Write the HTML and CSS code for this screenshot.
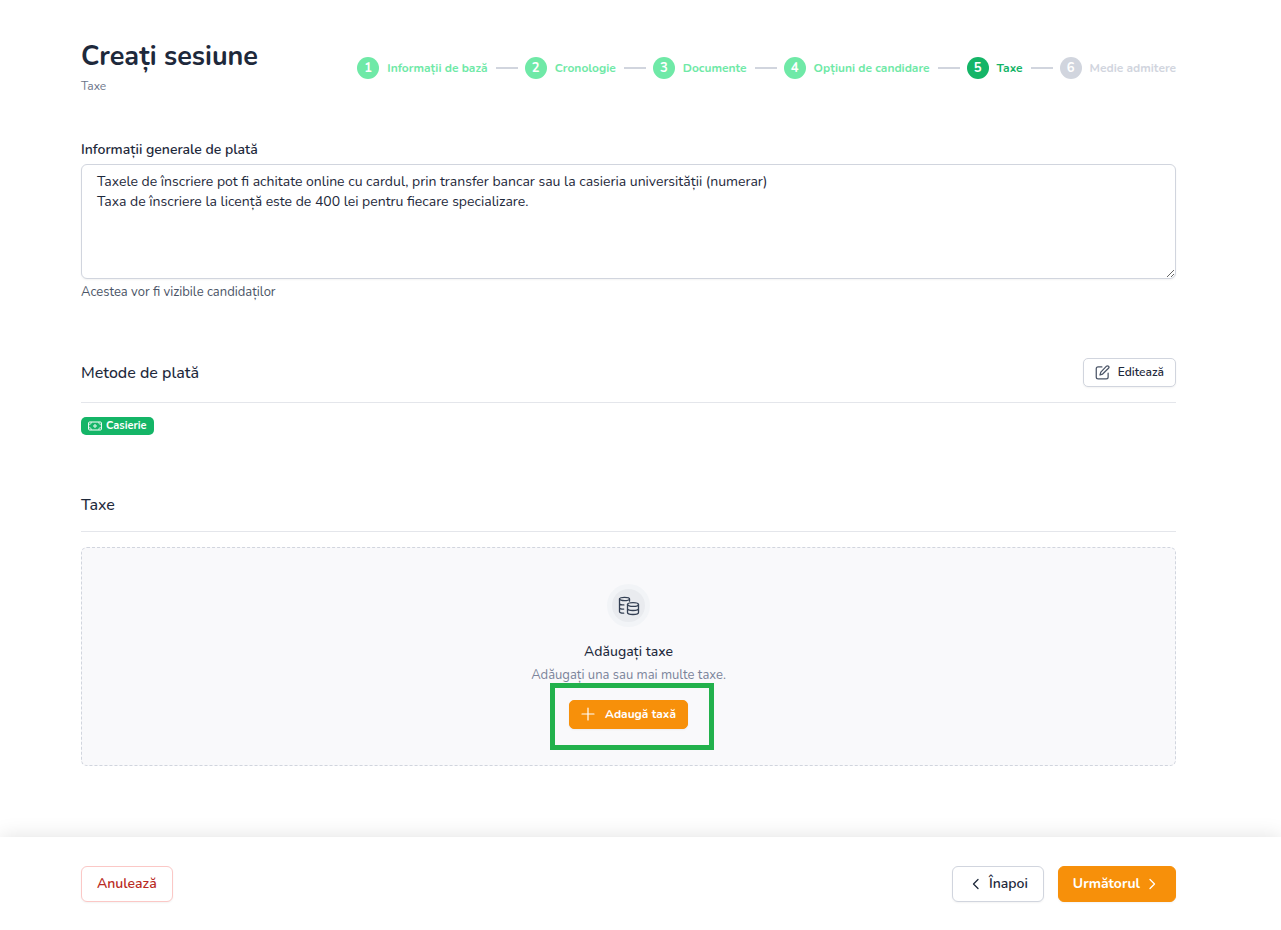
FILE: index.html
```html
<!DOCTYPE html>
<html lang="ro">
<head>
<meta charset="utf-8">
<meta name="viewport" content="width=device-width, initial-scale=1">
<title>Creați sesiune – Taxe</title>
<link rel="stylesheet" href="styles.css">
</head>
<body>
<main class="page">
  <header class="page-header">
    <div class="heading">
      <h1 class="title">Creați sesiune</h1>
      <p class="subtitle">Taxe</p>
    </div>
    <ol class="steps">
      <li class="step done"><span class="num">1</span><span>Informații de bază</span></li>
      <li class="step done"><span class="num">2</span><span>Cronologie</span></li>
      <li class="step done"><span class="num">3</span><span>Documente</span></li>
      <li class="step done"><span class="num">4</span><span>Opțiuni de candidare</span></li>
      <li class="step current" aria-current="step"><span class="num">5</span><span>Taxe</span></li>
      <li class="step"><span class="num">6</span><span>Medie admitere</span></li>
    </ol>
  </header>

  <div class="field">
    <label class="label" for="info">Informații generale de plată</label>
    <textarea class="textarea" id="info" rows="5" aria-describedby="info-help">Taxele de înscriere pot fi achitate online cu cardul, prin transfer bancar sau la casieria universității (numerar)
Taxa de înscriere la licență este de 400 lei pentru fiecare specializare.</textarea>
    <p class="help" id="info-help">Acestea vor fi vizibile candidaților</p>
  </div>

  <section class="methods">
    <div class="section-head">
      <h2 class="section-title">Metode de plată</h2>
      <button class="btn btn-small" type="button">
        <svg class="icon-edit" viewBox="0 0 24 24" fill="none" stroke="currentColor" stroke-width="2" stroke-linecap="round" stroke-linejoin="round" aria-hidden="true"><path d="M11 3H5a3 3 0 0 0-3 3v13a3 3 0 0 0 3 3h13a3 3 0 0 0 3-3v-6"/><path d="M18.400 1.900a2.100 2.100 0 0 1 3.200 3.200L12.200 14.500 8 16l1.300-4.500z"/></svg>
        Editează
      </button>
    </div>
    <span class="badge">
      <svg class="icon-cash" viewBox="0 0 14 10" fill="none" stroke="currentColor" aria-hidden="true"><rect x=".6" y="1" width="12.800" height="8" rx="1"/><circle cx="7" cy="5" r="1.200"/><path d="M3.200 1v.8A1.500 1.500 0 0 1 1.700 3.300H.6M10.800 1v.8a1.500 1.500 0 0 0 1.500 1.500h1.100M3.200 9v-.8a1.500 1.500 0 0 0-1.500-1.500H.6M10.800 9v-.8a1.500 1.500 0 0 1 1.500-1.500h1.100" stroke-width=".7"/></svg>
      Casierie
    </span>
  </section>

  <section class="fees">
    <div class="section-head">
      <h2 class="section-title">Taxe</h2>
    </div>
    <div class="empty">
      <span class="empty-icon">
        <svg class="icon-coins" viewBox="0 0 22 20" fill="none" stroke="currentColor" stroke-width="1.300" stroke-linecap="round" stroke-linejoin="round" aria-hidden="true"><ellipse cx="6.500" cy="3" rx="5" ry="1.700"/><path d="M1.500 3v12.500c0 .9 1.600 1.600 4.200 1.700M1.500 7.200c0 .9 1.800 1.600 4.400 1.700M1.500 11.400c0 .9 1.600 1.600 4.200 1.700M11.500 3v2.200"/><ellipse cx="15" cy="8.500" rx="5.500" ry="1.900"/><path d="M9.500 8.500v8c0 1.100 2.400 2 5.500 2s5.500-.9 5.500-2v-8M9.500 12.500c0 1.100 2.400 2 5.500 2s5.500-.9 5.500-2"/></svg>
      </span>
      <h3 class="empty-title">Adăugați taxe</h3>
      <p class="empty-text">Adăugați una sau mai multe taxe.</p>
      <div class="empty-action">
        <button class="btn btn-small btn-primary" type="button">
          <svg class="icon-plus" viewBox="0 0 14 14" fill="none" stroke="currentColor" stroke-width="1.200" stroke-linecap="round" aria-hidden="true"><path d="M7 1v12M1 7h12"/></svg>
          Adaugă taxă
        </button>
        <span class="highlight"></span>
      </div>
    </div>
  </section>
</main>

<footer class="footer">
  <button class="btn btn-danger" type="button">Anulează</button>
  <div class="footer-nav">
    <button class="btn btn-back" type="button">
      <svg class="icon-chevron" viewBox="0 0 8 12" fill="none" stroke="currentColor" stroke-width="1.300" stroke-linecap="round" stroke-linejoin="round" aria-hidden="true"><path d="M6 1.500 1.500 6 6 10.500"/></svg>
      Înapoi
    </button>
    <button class="btn btn-primary btn-next" type="button">
      Următorul
      <svg class="icon-chevron" viewBox="0 0 8 12" fill="none" stroke="currentColor" stroke-width="1.300" stroke-linecap="round" stroke-linejoin="round" aria-hidden="true"><path d="M2 1.500 6.500 6 2 10.500"/></svg>
    </button>
  </div>
</footer>
</body>
</html>
```
FILE: styles.css
```css
* {
  box-sizing: border-box;
  margin: 0;
}

body {
  min-height: 100vh;
  display: flex;
  flex-direction: column;
  background: #fff;
  color: #1e293b;
  font: 14px/20px Nunito, "Open Sans", sans-serif;
}

button,
textarea {
  font: inherit;
  color: inherit;
}

.page {
  flex: 1;
  padding: 38px 105px 64px 81px;
}

.page-header {
  display: flex;
  justify-content: space-between;
  align-items: center;
}

.title {
  font-size: 27px;
  line-height: 38px;
  font-weight: 700;
}

.subtitle {
  font-size: 12px;
  color: #6b7489;
}

.steps {
  display: flex;
  align-items: center;
  gap: 7px;
  padding: 0 0 0 16px;
  margin-top: 2px;
  list-style: none;
}

.step {
  display: flex;
  align-items: center;
  gap: 8px;
  white-space: nowrap;
  font-size: 12px;
  font-weight: 700;
  color: #d1d5de;
}

.step:not(:last-child)::after {
  content: "";
  width: 22px;
  height: 2px;
  background: #d1d5de;
}

.num {
  width: 22px;
  height: 22px;
  border-radius: 50%;
  background: #d1d5de;
  color: #fff;
  font-size: 13px;
  line-height: 22px;
  text-align: center;
}

.done {
  color: #6fe9a7;
}

.done .num {
  background: #6fe9a7;
}

.current {
  color: #14b567;
}

.current .num {
  background: #14b567;
}

.field {
  display: flex;
  flex-direction: column;
  margin-top: 44px;
}

.label {
  font-weight: 600;
  margin-bottom: 4px;
}

.textarea {
  display: block;
  width: 100%;
  height: 115px;
  padding: 7px 15px;
  border: 1px solid #d1d5de;
  border-radius: 6px;
  box-shadow: 0 1px 2px #0000000d;
  resize: vertical;
}

.help {
  margin-top: 3px;
  font-size: 13px;
  color: #4b5567;
}

.methods {
  margin-top: 56px;
}

.fees {
  margin-top: 54px;
}

.section-head {
  display: flex;
  justify-content: space-between;
  align-items: center;
  padding-bottom: 15px;
  margin-bottom: 14px;
  border-bottom: 1px solid #e4e6eb;
}

.fees .section-head {
  padding-bottom: 12px;
  margin-bottom: 15px;
}

.section-title {
  font-size: 16px;
  line-height: 28px;
  font-weight: 500;
}

.btn {
  display: inline-flex;
  align-items: center;
  justify-content: center;
  height: 36px;
  padding: 0 15px;
  border: 1px solid #d1d5de;
  border-radius: 6px;
  background: #fff;
  box-shadow: 0 1px 2px #0000000d;
  font-weight: 600;
  white-space: nowrap;
  cursor: pointer;
}

.btn-small {
  height: 29px;
  padding: 0 11px 1px;
  gap: 8px;
  border-radius: 5px;
  font-size: 12px;
}

.btn-primary {
  border-color: #f7900a;
  background: #f7900a;
  color: #fff;
  font-weight: 700;
}

.btn-danger {
  border-color: #fbc8c6;
  color: #b92b24;
}

.icon-edit {
  width: 15px;
  height: 15px;
  color: #4b5567;
}

.badge {
  display: inline-flex;
  align-items: center;
  gap: 4px;
  height: 18px;
  padding: 0 7px;
  border-radius: 5px;
  background: #14b567;
  color: #fff;
  font-size: 11px;
  font-weight: 700;
  vertical-align: top;
}

.icon-cash {
  width: 14px;
  height: 10px;
}

.empty {
  display: flex;
  flex-direction: column;
  align-items: center;
  padding: 36px 16px;
  border: 1px dashed #d1d5de;
  border-radius: 6px;
  background: #f9f9fb;
}

.empty-icon {
  display: grid;
  place-items: center;
  width: 43px;
  height: 43px;
  border: 5px solid #f2f4f7;
  border-radius: 50%;
  background: #e9ebef;
}

.icon-coins {
  width: 22px;
  height: 20px;
  color: #344054;
}

.empty-title {
  margin-top: 15px;
  font-size: 14px;
  font-weight: 500;
}

.empty-text {
  margin-top: 3px;
  font-size: 13px;
  color: #7b849a;
}

.empty-action {
  position: relative;
  display: flex;
  margin-top: 15px;
}

.icon-plus {
  width: 14px;
  height: 14px;
  margin-right: 2px;
}

.highlight {
  position: absolute;
  inset: -17px -26px -21px -19px;
  border: 5px solid #22b14c;
  pointer-events: none;
}

.footer {
  display: flex;
  justify-content: space-between;
  align-items: center;
  padding: 29px 105px 28px 81px;
  background: #fff;
  box-shadow: 0 0 20px #0000001f;
}

.footer-nav {
  display: flex;
  gap: 14px;
}

.btn-back {
  gap: 9px;
  padding-left: 19px;
}

.btn-next {
  gap: 8px;
  padding: 0 19px 0 14px;
}

.icon-chevron {
  width: 8px;
  height: 12px;
}
```
